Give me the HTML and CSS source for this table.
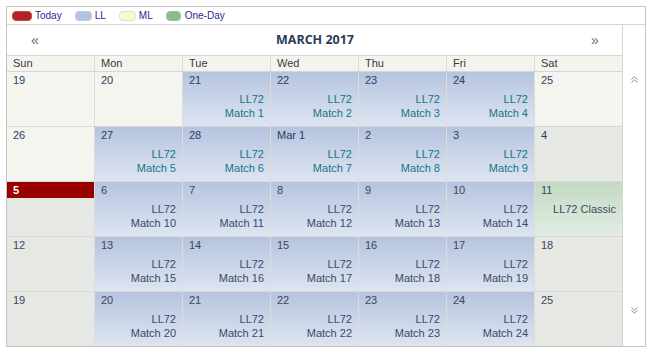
FILE: index.html
```html
<!DOCTYPE html>
<html>
<head>
<meta charset="utf-8">
<link rel="stylesheet" href="styles.css">
</head>
<body>
<div class="cal">
  <div class="legend">
    <span class="sw sw-today"></span><span class="lg-text">Today</span>
    <span class="sw sw-ll"></span><span class="lg-text">LL</span>
    <span class="sw sw-ml"></span><span class="lg-text">ML</span>
    <span class="sw sw-od"></span><span class="lg-text">One-Day</span>
  </div>
  <div class="main">
    <div class="month">
      <div class="head">
        <span class="nav">&laquo;</span>
        <span class="title">MARCH 2017</span>
        <span class="nav">&raquo;</span>
      </div>
      <div class="weekdays">
        <div class="wd">Sun</div><div class="wd">Mon</div><div class="wd">Tue</div><div class="wd">Wed</div><div class="wd">Thu</div><div class="wd">Fri</div><div class="wd">Sat</div>
      </div>
      <div class="week">
        <div class="day other past"><div class="num">19</div></div>
        <div class="day other past"><div class="num">20</div></div>
        <div class="day ll past"><div class="num">21</div><div class="ev">LL72<br>Match 1</div></div>
        <div class="day ll past"><div class="num">22</div><div class="ev">LL72<br>Match 2</div></div>
        <div class="day ll past"><div class="num">23</div><div class="ev">LL72<br>Match 3</div></div>
        <div class="day ll past"><div class="num">24</div><div class="ev">LL72<br>Match 4</div></div>
        <div class="day other past last"><div class="num">25</div></div>
      </div>
      <div class="week">
        <div class="day other past"><div class="num">26</div></div>
        <div class="day ll past"><div class="num">27</div><div class="ev">LL72<br>Match 5</div></div>
        <div class="day ll past"><div class="num">28</div><div class="ev">LL72<br>Match 6</div></div>
        <div class="day ll past"><div class="num">Mar 1</div><div class="ev">LL72<br>Match 7</div></div>
        <div class="day ll past"><div class="num">2</div><div class="ev">LL72<br>Match 8</div></div>
        <div class="day ll past"><div class="num">3</div><div class="ev">LL72<br>Match 9</div></div>
        <div class="day cur past last"><div class="num">4</div></div>
      </div>
      <div class="week">
        <div class="day cur today"><div class="num">5</div></div>
        <div class="day ll"><div class="num">6</div><div class="ev">LL72<br>Match 10</div></div>
        <div class="day ll"><div class="num">7</div><div class="ev">LL72<br>Match 11</div></div>
        <div class="day ll"><div class="num">8</div><div class="ev">LL72<br>Match 12</div></div>
        <div class="day ll"><div class="num">9</div><div class="ev">LL72<br>Match 13</div></div>
        <div class="day ll"><div class="num">10</div><div class="ev">LL72<br>Match 14</div></div>
        <div class="day od last"><div class="num">11</div><div class="ev">LL72 Classic</div></div>
      </div>
      <div class="week">
        <div class="day cur"><div class="num">12</div></div>
        <div class="day ll"><div class="num">13</div><div class="ev">LL72<br>Match 15</div></div>
        <div class="day ll"><div class="num">14</div><div class="ev">LL72<br>Match 16</div></div>
        <div class="day ll"><div class="num">15</div><div class="ev">LL72<br>Match 17</div></div>
        <div class="day ll"><div class="num">16</div><div class="ev">LL72<br>Match 18</div></div>
        <div class="day ll"><div class="num">17</div><div class="ev">LL72<br>Match 19</div></div>
        <div class="day cur last"><div class="num">18</div></div>
      </div>
      <div class="week lastweek">
        <div class="day cur"><div class="num">19</div></div>
        <div class="day ll"><div class="num">20</div><div class="ev">LL72<br>Match 20</div></div>
        <div class="day ll"><div class="num">21</div><div class="ev">LL72<br>Match 21</div></div>
        <div class="day ll"><div class="num">22</div><div class="ev">LL72<br>Match 22</div></div>
        <div class="day ll"><div class="num">23</div><div class="ev">LL72<br>Match 23</div></div>
        <div class="day ll"><div class="num">24</div><div class="ev">LL72<br>Match 24</div></div>
        <div class="day cur last"><div class="num">25</div></div>
      </div>
    </div>
    <div class="side">
      <svg class="chev" width="7" height="7" viewBox="0 0 7 7"><polyline points="0.5,3.5 3.5,0.8 6.5,3.5" fill="none" stroke="#8a8a8a" stroke-width="1"/><polyline points="0.5,6.5 3.5,3.8 6.5,6.5" fill="none" stroke="#8a8a8a" stroke-width="1"/></svg>
      <svg class="chev" width="7" height="7" viewBox="0 0 7 7"><polyline points="0.5,0.5 3.5,3.2 6.5,0.5" fill="none" stroke="#8a8a8a" stroke-width="1"/><polyline points="0.5,3.5 3.5,6.2 6.5,3.5" fill="none" stroke="#8a8a8a" stroke-width="1"/></svg>
    </div>
  </div>
</div>
</body>
</html>
```
FILE: styles.css
```css
* { box-sizing: border-box; }
body {
  margin: 6px 0 0 6px;
  background: #ffffff;
  font-family: "Liberation Sans", Arial, sans-serif;
}
.cal {
  width: 640px;
  height: 341px;
  border: 1px solid #c4c4c4;
  background: #fff;
  display: flex;
  flex-direction: column;
}
.legend {
  height: 18px;
  border-bottom: 1px solid #d6d6d6;
  display: flex;
  align-items: center;
  padding-left: 5px;
  font-size: 10px;
  color: #1f2a8f;
}
.sw {
  display: inline-block;
  height: 10px;
  border-radius: 4px;
  margin-right: 3px;
}
.sw-today { width: 20px; background: #b22222; border: 1px solid #c04a4a; }
.sw-ll { width: 17px; background: #b0c4de; border: 1px solid #bdcce3; }
.sw-ml { width: 17px; background: #fafad2; border: 1px solid #e0e0c4; }
.sw-od { width: 15px; background: #8fbc8f; border: 1px solid #9cc49c; margin-right: 4px; }
.lg-text { margin-right: 13px; }
.main {
  flex: 1;
  display: flex;
}
.month {
  width: 616px;
  display: flex;
  flex-direction: column;
  border-right: 1px solid #d6d6d6;
}
.side {
  flex: 1;
  display: flex;
  flex-direction: column;
  justify-content: space-between;
  align-items: center;
  padding: 51px 0 32px;
}
.chev { display: block; }
.head {
  height: 31px;
  border-bottom: 1px solid #d6d6d6;
  display: flex;
  align-items: center;
  justify-content: space-between;
  padding: 0 23px 1px 24px;
}
.nav {
  font-size: 14px;
  color: #6a6a6a;
  width: 8px;
}
.title {
  font-family: "Open Sans", "Liberation Sans", sans-serif;
  font-weight: bold;
  font-size: 12.5px;
  color: #2c3a55;
}
.weekdays {
  display: flex;
  height: 16px;
  border-bottom: 1px solid #d6d6d6;
  background: #f4f4ef;
}
.wd {
  width: 88px;
  border-right: 1px solid #dcdcdc;
  font-size: 11px;
  line-height: 15px;
  padding-left: 6px;
  color: #3a3a3a;
}
.wd:last-child { border-right: none; width: 87px; }
.week {
  display: flex;
  height: 55px;
  border-bottom: 1px solid #d9d9d9;
}
.week.lastweek { border-bottom: none; height: 54px; }
.day {
  width: 88px;
  border-right: 1px solid #dcdcdc;
  font-size: 11px;
  color: #3c4756;
}
.day.last { border-right: none; width: 87px; }
.num {
  line-height: 14px;
  padding: 1px 6px 1px;
}
.ev {
  margin-top: 4px;
  line-height: 14px;
  text-align: right;
  padding-right: 6px;
  color: #3a4a68;
}
.other { background: #f5f5f0; }
.cur { background: #e6e8e3; }
.ll { background: linear-gradient(to bottom, #b5c4df, #dee5f1); }
.od { background: linear-gradient(to bottom, #c2dac3, #e3ede3); }
.past .num { color: #2b3d60; }
.past .ev { color: #13768a; }
.today .num {
  background: #990000;
  color: #fff;
  font-weight: bold;
}
```
